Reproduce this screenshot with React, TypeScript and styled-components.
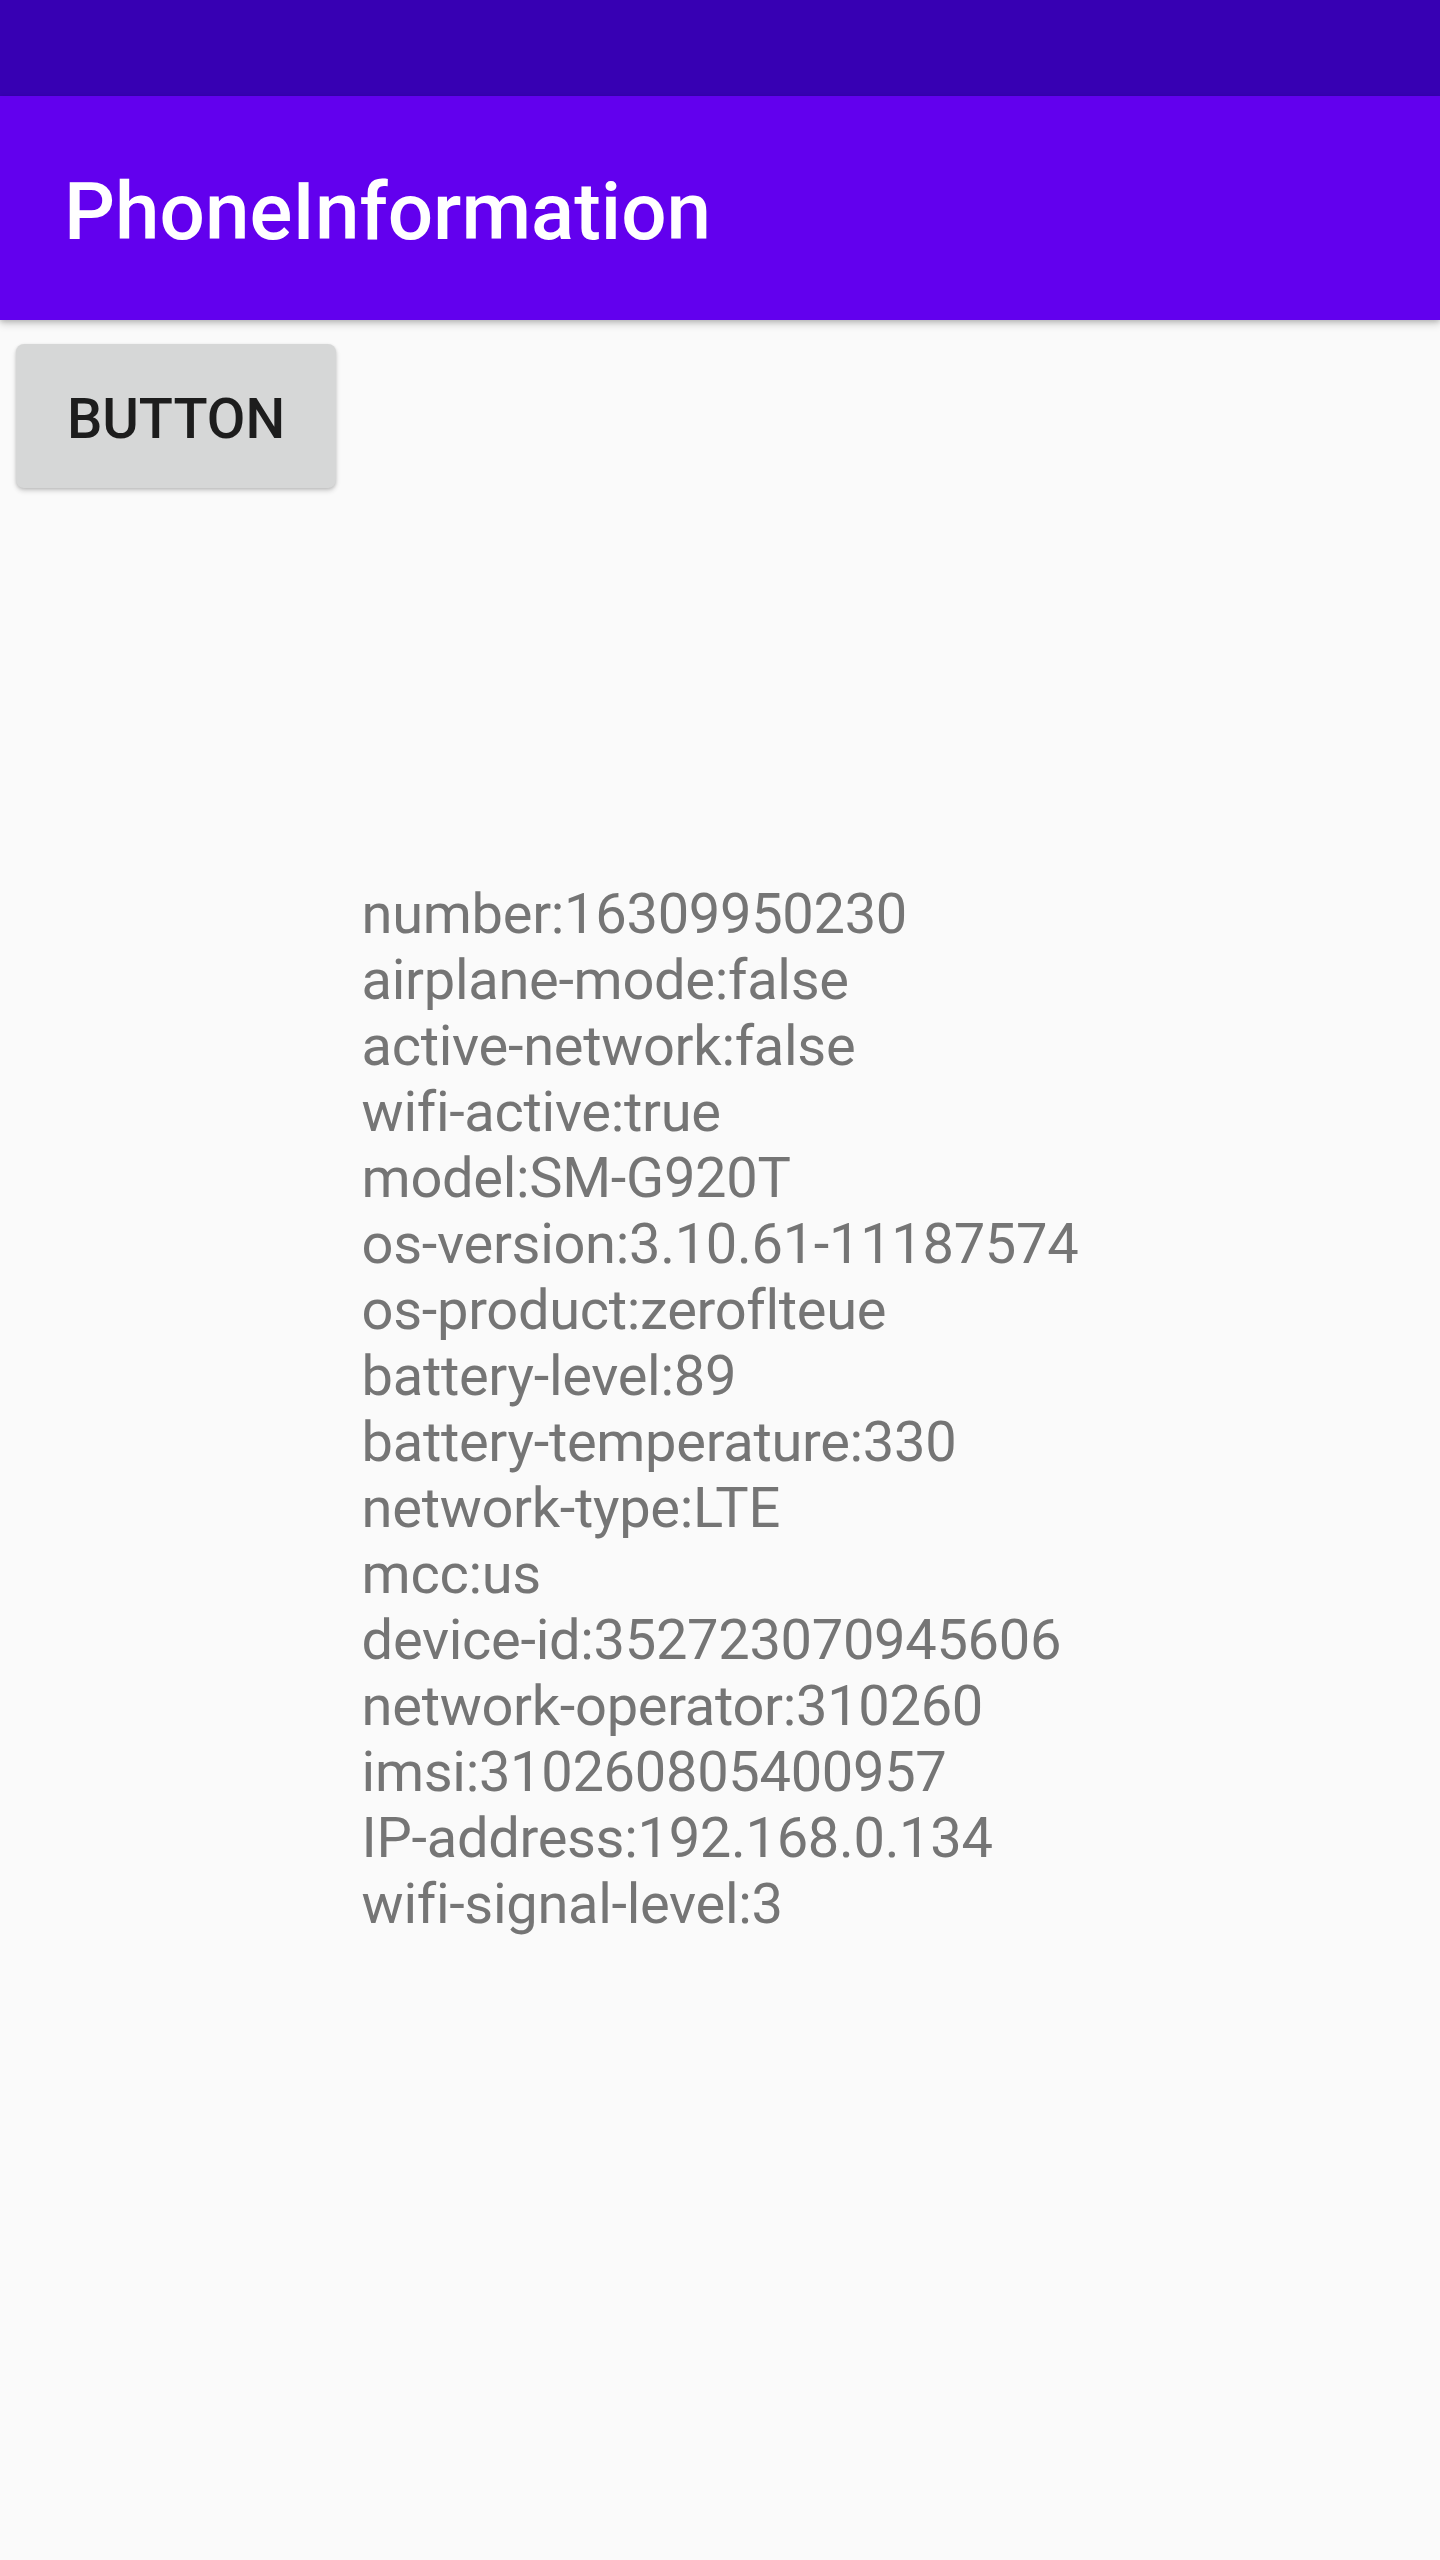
import React from "react";
import styled, { createGlobalStyle } from "styled-components";

const GlobalStyle = createGlobalStyle`
  html, body {
    margin: 0;
    padding: 0;
    background: #fafafa;
  }
  body {
    font-family: Roboto, "Noto Sans", "Liberation Sans", sans-serif;
  }
  * { box-sizing: border-box; }
`;

const Screen = styled.div`
  width: 1440px;
  min-height: 2560px;
  background: #fafafa;
  display: flex;
  flex-direction: column;
`;

const StatusBar = styled.div`
  height: 96px;
  background: #3700b3;
`;

const AppBar = styled.header`
  height: 224px;
  background: #6200ee;
  display: flex;
  align-items: center;
  padding: 8px 64px 0 64px;
  box-shadow: 0 4px 8px rgba(0, 0, 0, 0.18), 0 2px 4px rgba(0, 0, 0, 0.12);
  position: relative;
  z-index: 1;
`;

const Title = styled.h1`
  margin: 0;
  font-family: Roboto, "Noto Sans", sans-serif;
  font-weight: 500;
  font-size: 80px;
  line-height: 94px;
  color: #ffffff;
`;

const Content = styled.main`
  display: flex;
  flex-direction: column;
  padding: 24px 16px 0 16px;
`;

const PrimaryButton = styled.button`
  align-self: flex-start;
  width: 320px;
  height: 144px;
  border: none;
  border-radius: 8px;
  background: #d6d7d7;
  color: #1d1d1d;
  font-family: Roboto, "Noto Sans", sans-serif;
  font-weight: 500;
  font-size: 56px;
  letter-spacing: 0;
  text-transform: uppercase;
  padding: 6px 0 0 0;
  box-shadow: 0 3px 5px rgba(0, 0, 0, 0.16), 0 1px 3px rgba(0, 0, 0, 0.12);
  cursor: pointer;
`;

const InfoWrap = styled.section`
  display: flex;
  justify-content: center;
  margin-top: 393px;
`;

const InfoList = styled.div`
  display: flex;
  flex-direction: column;
  text-align: left;
`;

const InfoLine = styled.div`
  font-family: Roboto, "Noto Sans", sans-serif;
  font-weight: 400;
  font-size: 56px;
  line-height: 66px;
  letter-spacing: -0.3px;
  color: #757575;
  white-space: nowrap;
`;

const info: [string, string][] = [
  ["number", "16309950230"],
  ["airplane-mode", "false"],
  ["active-network", "false"],
  ["wifi-active", "true"],
  ["model", "SM-G920T"],
  ["os-version", "3.10.61-11187574"],
  ["os-product", "zeroflteue"],
  ["battery-level", "89"],
  ["battery-temperature", "330"],
  ["network-type", "LTE"],
  ["mcc", "us"],
  ["device-id", "352723070945606"],
  ["network-operator", "310260"],
  ["imsi", "310260805400957"],
  ["IP-address", "192.168.0.134"],
  ["wifi-signal-level", "3"],
];

export default function App() {
  return (
    <>
      <GlobalStyle />
      <Screen>
        <StatusBar />
        <AppBar>
          <Title>PhoneInformation</Title>
        </AppBar>
        <Content>
          <PrimaryButton>Button</PrimaryButton>
          <InfoWrap>
            <InfoList>
              {info.map(([k, v]) => (
                <InfoLine key={k}>
                  {k}:{v}
                </InfoLine>
              ))}
            </InfoList>
          </InfoWrap>
        </Content>
      </Screen>
    </>
  );
}
